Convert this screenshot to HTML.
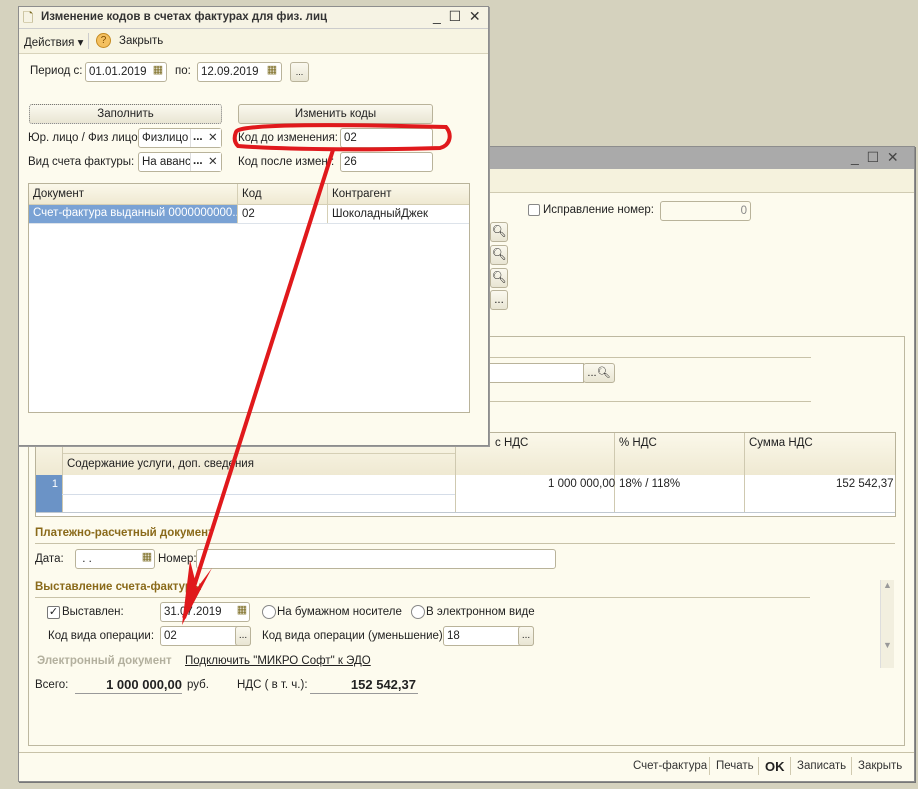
<!DOCTYPE html>
<html><head><meta charset="utf-8">
<style>
*{box-sizing:border-box;margin:0;padding:0}
body{width:918px;height:789px;background:#d5d2be;font-family:"Liberation Sans",sans-serif;font-size:11px;color:#222;position:relative;overflow:hidden}
.a{position:absolute}
.inp{position:absolute;background:#fff;border:1px solid #b9b39a;border-radius:3px;height:20px;padding:3px 3px;font-size:11.5px;white-space:nowrap;overflow:hidden}
.btn{position:absolute;background:linear-gradient(#fbf9ef,#e9e5d3);border:1px solid #b9b39a;border-radius:3px;height:20px;text-align:center;font-size:11.5px;line-height:18px}
.lbl{position:absolute;font-size:11.5px;white-space:nowrap}
.hdr{position:absolute;font-weight:bold;color:#8a6a1a;font-size:11.5px;white-space:nowrap}
.hl{position:absolute;height:1px;background:#c8c2a8}
.cal{position:absolute;width:14px;height:18px;font-size:11px;text-align:center;color:#7a6a20}
</style></head><body>

<!-- back window -->
<div class="a" style="left:18px;top:146px;width:897px;height:636px;background:#fdfbee;border:1px solid #8d8d8d;box-shadow:1px 1px 0 #777"></div>
<div class="a" style="left:19px;top:147px;width:895px;height:22px;background:#aaaaaa"></div>
<div class="lbl" style="left:851px;top:149px;font-size:14px;color:#444">_&nbsp;&nbsp;☐&nbsp;&nbsp;✕</div>
<div class="a" style="left:19px;top:169px;width:895px;height:24px;background:#f5f2dd;border-bottom:1px solid #d0cbb2"></div>
<div class="a" style="left:528px;top:204px;width:12px;height:12px;border:1px solid #888;border-radius:2px;background:#fff"></div>
<div class="lbl" style="left:543px;top:204px">Исправление номер:</div>
<div class="inp" style="left:660px;top:201px;width:91px;text-align:right;color:#888;background:#fdfbee">0</div>
<div class="btn" style="left:490px;top:222px;width:18px">🔍︎</div>
<div class="btn" style="left:490px;top:245px;width:18px">🔍︎</div>
<div class="btn" style="left:490px;top:268px;width:18px">🔍︎</div>
<div class="btn" style="left:490px;top:290px;width:18px">...</div>
<div class="a" style="left:28px;top:336px;width:877px;height:410px;border:1px solid #bdb8a0"></div>
<div class="hl" style="left:488px;top:357px;width:323px"></div>
<div class="inp" style="left:488px;top:363px;width:96px;border-left:none;border-radius:0"></div>
<div class="btn" style="left:583px;top:363px;width:32px;font-size:11px">...🔍︎</div>
<div class="hl" style="left:488px;top:401px;width:323px"></div>

<!-- table -->
<div class="a" style="left:35px;top:432px;width:861px;height:85px;border:1px solid #b9b39a;background:#fff"></div>
<div class="a" style="left:36px;top:433px;width:859px;height:42px;background:linear-gradient(#fbf8ea,#efe9d2)"></div>
<div class="a" style="left:62px;top:453px;width:393px;height:1px;background:#d5cfb5"></div>
<div class="lbl" style="left:67px;top:458px">Содержание услуги, доп. сведения</div>
<div class="a" style="left:455px;top:433px;width:1px;height:80px;background:#cfc9b0"></div>
<div class="a" style="left:614px;top:433px;width:1px;height:80px;background:#cfc9b0"></div>
<div class="a" style="left:744px;top:433px;width:1px;height:80px;background:#cfc9b0"></div>
<div class="a" style="left:62px;top:433px;width:1px;height:80px;background:#cfc9b0"></div>
<div class="lbl" style="left:495px;top:437px">с НДС</div>
<div class="lbl" style="left:619px;top:437px">% НДС</div>
<div class="lbl" style="left:749px;top:437px">Сумма НДС</div>
<div class="a" style="left:36px;top:475px;width:26px;height:37px;background:#6b93c6;color:#fff;text-align:right;padding-right:4px;padding-top:3px">1</div>
<div class="a" style="left:62px;top:494px;width:393px;height:1px;background:#d5dde8"></div>
<div class="a" style="left:36px;top:512px;width:859px;height:1px;background:#c0c8d0"></div>
<div class="lbl" style="left:548px;top:478px">1 000 000,00</div>
<div class="lbl" style="left:619px;top:478px">18% / 118%</div>
<div class="lbl" style="left:836px;top:478px">152 542,37</div>

<div class="hdr" style="left:35px;top:527px">Платежно-расчетный документ</div>
<div class="hl" style="left:35px;top:543px;width:860px"></div>
<div class="lbl" style="left:35px;top:553px">Дата:</div>
<div class="inp" style="left:75px;top:549px;width:80px">&nbsp;. .</div>
<div class="cal" style="left:140px;top:550px">▦</div>
<div class="lbl" style="left:158px;top:553px">Номер:</div>
<div class="inp" style="left:196px;top:549px;width:360px"></div>

<div class="hdr" style="left:35px;top:581px">Выставление счета-фактуры</div>
<div class="hl" style="left:35px;top:597px;width:775px"></div>
<div class="a" style="left:880px;top:580px;width:14px;height:88px;background:#f2efdf;border-left:1px solid #ddd;color:#999;font-size:9px;text-align:center">▲<br><br><br><br><br><br>▼</div>
<div class="a" style="left:47px;top:606px;width:13px;height:13px;border:1px solid #777;border-radius:2px;background:#fff;font-size:11px;line-height:11px;text-align:center">✓</div>
<div class="lbl" style="left:62px;top:606px">Выставлен:</div>
<div class="inp" style="left:160px;top:602px;width:90px">31.07.2019</div>
<div class="cal" style="left:235px;top:603px">▦</div>
<div class="a" style="left:262px;top:605px;width:14px;height:14px;border:1px solid #888;border-radius:50%;background:#fff"></div>
<div class="lbl" style="left:277px;top:606px">На бумажном носителе</div>
<div class="a" style="left:411px;top:605px;width:14px;height:14px;border:1px solid #888;border-radius:50%;background:#fff"></div>
<div class="lbl" style="left:426px;top:606px">В электронном виде</div>
<div class="lbl" style="left:48px;top:630px">Код вида операции:</div>
<div class="inp" style="left:160px;top:626px;width:91px">02</div>
<div class="btn" style="left:235px;top:626px;width:16px;font-size:10px">...</div>
<div class="lbl" style="left:262px;top:630px">Код вида операции (уменьшение):</div>
<div class="inp" style="left:443px;top:626px;width:91px">18</div>
<div class="btn" style="left:518px;top:626px;width:16px;font-size:10px">...</div>
<div class="lbl" style="left:37px;top:655px;font-weight:bold;color:#b3b09e">Электронный документ</div>
<div class="lbl" style="left:185px;top:655px;text-decoration:underline">Подключить "МИКРО Софт" к ЭДО</div>
<div class="lbl" style="left:35px;top:679px">Всего:</div>
<div class="lbl" style="left:75px;top:677px;width:107px;text-align:right;font-weight:bold;font-size:13px">1 000 000,00</div>
<div class="hl" style="left:75px;top:693px;width:107px;background:#999"></div>
<div class="lbl" style="left:187px;top:679px">руб.</div>
<div class="lbl" style="left:237px;top:679px">НДС ( в т. ч.):</div>
<div class="lbl" style="left:310px;top:677px;width:106px;text-align:right;font-weight:bold;font-size:13px">152 542,37</div>
<div class="hl" style="left:310px;top:693px;width:108px;background:#999"></div>

<div class="a" style="left:19px;top:752px;width:895px;height:1px;background:#c8c2a8"></div>
<div class="lbl" style="left:633px;top:760px;color:#333">Счет-фактура</div>
<div class="a" style="left:709px;top:757px;width:1px;height:18px;background:#d0cab0"></div>
<div class="lbl" style="left:716px;top:760px;color:#333">Печать</div>
<div class="a" style="left:758px;top:757px;width:1px;height:18px;background:#d0cab0"></div>
<div class="lbl" style="left:765px;top:759px;font-weight:bold;font-size:13px">OK</div>
<div class="a" style="left:790px;top:757px;width:1px;height:18px;background:#d0cab0"></div>
<div class="lbl" style="left:797px;top:760px;color:#333">Записать</div>
<div class="a" style="left:851px;top:757px;width:1px;height:18px;background:#d0cab0"></div>
<div class="lbl" style="left:858px;top:760px;color:#333">Закрыть</div>

<!-- front window -->
<div class="a" style="left:18px;top:6px;width:471px;height:440px;background:#fdfbee;border:1px solid #8d8d8d;box-shadow:1px 1px 0 #999"></div>
<div class="a" style="left:19px;top:7px;width:469px;height:21px;background:#f6f3e4"></div>
<div class="lbl" style="left:23px;top:9px;font-size:13px;color:#7a6a20">🗋</div>
<div class="lbl" style="left:41px;top:11px;font-weight:bold;color:#333">Изменение кодов в счетах фактурах для физ. лиц</div>
<div class="lbl" style="left:433px;top:8px;font-size:14px;color:#333">_&nbsp;&nbsp;☐&nbsp;&nbsp;✕</div>
<div class="a" style="left:19px;top:28px;width:469px;height:26px;background:#f7f4e2;border-top:1px solid #ccc;border-bottom:1px solid #d8d3bb"></div>
<div class="lbl" style="left:24px;top:35px">Действия ▾</div>
<div class="a" style="left:88px;top:33px;width:1px;height:16px;background:#ccc"></div>
<div class="a" style="left:96px;top:33px;width:15px;height:15px;border-radius:50%;background:#f4c060;border:1px solid #c58a20;font-size:10px;text-align:center;line-height:13px;color:#7a4a00">?</div>
<div class="lbl" style="left:119px;top:35px">Закрыть</div>
<div class="lbl" style="left:30px;top:65px">Период с:</div>
<div class="inp" style="left:85px;top:62px;width:82px">01.01.2019</div>
<div class="cal" style="left:151px;top:63px">▦</div>
<div class="lbl" style="left:175px;top:65px">по:</div>
<div class="inp" style="left:197px;top:62px;width:85px">12.09.2019</div>
<div class="cal" style="left:265px;top:63px">▦</div>
<div class="btn" style="left:290px;top:62px;width:19px;font-size:9px">...</div>
<div class="btn" style="left:29px;top:104px;width:193px;border:1px dotted #777">Заполнить</div>
<div class="btn" style="left:238px;top:104px;width:195px">Изменить коды</div>
<div class="lbl" style="left:28px;top:132px">Юр. лицо / Физ лицо:</div>
<div class="inp" style="left:138px;top:128px;width:84px">Физлицо</div>
<div class="a" style="left:190px;top:129px;width:31px;height:18px;background:#fff;border-left:1px solid #ddd"></div>
<div class="lbl" style="left:193px;top:131px;font-weight:bold">...</div>
<div class="lbl" style="left:208px;top:130px;color:#333">✕</div>
<div class="lbl" style="left:28px;top:156px">Вид счета фактуры:</div>
<div class="inp" style="left:138px;top:152px;width:84px">На аванс</div>
<div class="a" style="left:190px;top:153px;width:31px;height:18px;background:#fff;border-left:1px solid #ddd"></div>
<div class="lbl" style="left:193px;top:155px;font-weight:bold">...</div>
<div class="lbl" style="left:208px;top:154px;color:#333">✕</div>
<div class="lbl" style="left:238px;top:132px">Код до изменения:</div>
<div class="inp" style="left:340px;top:128px;width:93px">02</div>
<div class="lbl" style="left:238px;top:156px">Код после измен.:</div>
<div class="inp" style="left:340px;top:152px;width:93px">26</div>
<div class="a" style="left:28px;top:183px;width:442px;height:230px;border:1px solid #b9b39a;background:#fff"></div>
<div class="a" style="left:29px;top:184px;width:440px;height:21px;background:linear-gradient(#fbf8ea,#efe9d2);border-bottom:1px solid #d5cfb5"></div>
<div class="lbl" style="left:33px;top:188px">Документ</div>
<div class="lbl" style="left:242px;top:188px">Код</div>
<div class="lbl" style="left:332px;top:188px">Контрагент</div>
<div class="a" style="left:237px;top:184px;width:1px;height:40px;background:#d5cfb5"></div>
<div class="a" style="left:327px;top:184px;width:1px;height:40px;background:#d5cfb5"></div>
<div class="a" style="left:29px;top:205px;width:208px;height:18px;background:#7aa2d4;color:#fff;padding:2px 4px;white-space:nowrap;overflow:hidden;font-size:11.5px">Счет-фактура выданный 0000000000...</div>
<div class="lbl" style="left:242px;top:208px">02</div>
<div class="lbl" style="left:332px;top:208px">ШоколадныйДжек</div>
<div class="a" style="left:29px;top:223px;width:440px;height:1px;background:#dde3ea"></div>

<!-- red annotations -->
<svg class="a" style="left:0;top:0" width="918" height="789">
<path d="M236 132 C238 124 330 124 446 127 C452 134 451 145 440 148 C380 150 290 150 238 146 C234 142 234 137 236 132 Z" fill="none" stroke="#e0191c" stroke-width="4"/>
<line x1="333" y1="150" x2="184" y2="618" stroke="#e0191c" stroke-width="4"/>
<path d="M182 625 L190 560 L197 588 L212 568 Z" fill="#e0191c"/>
</svg>
</body></html>
